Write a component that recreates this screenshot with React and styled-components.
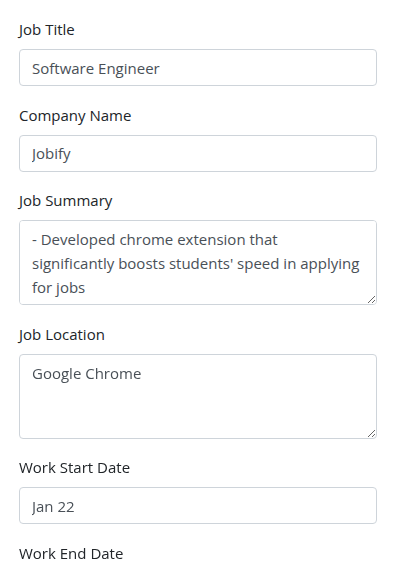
import React from "react";
import styled, { createGlobalStyle } from "styled-components";

const GlobalStyle = createGlobalStyle`
  html, body {
    margin: 0;
    padding: 0;
    background: #ffffff;
  }
  body {
    font-family: "Open Sans", "Noto Sans", "Liberation Sans", sans-serif;
  }
  * {
    box-sizing: border-box;
  }
`;

const fields = [
  { label: "Job Title", value: "Software Engineer" },
  { label: "Company Name", value: "Jobify" },
  {
    label: "Job Summary",
    value:
      "- Developed chrome extension that significantly boosts students' speed in applying for jobs",
    multiline: true,
  },
  { label: "Job Location", value: "Google Chrome", multiline: true },
  { label: "Work Start Date", value: "Jan 22" },
  { label: "Work End Date", value: "" },
];

const App = () => (
  <>
    <GlobalStyle />
    <Form>
      {fields.map((f) => (
        <Group key={f.label}>
          <Label>{f.label}</Label>
          {f.multiline ? (
            <TextArea defaultValue={f.value} rows={3} />
          ) : (
            <Input type="text" defaultValue={f.value} />
          )}
        </Group>
      ))}
    </Form>
  </>
);

const Form = styled.form`
  display: flex;
  flex-direction: column;
  gap: 16.5px;
  padding: 17px 18px 0 19px;
  border-left: 2px solid #fcfcf1;
  margin-left: -2px;
  min-height: 573px;
`;

const Group = styled.div`
  display: flex;
  flex-direction: column;
`;

const Label = styled.label`
  display: block;
  font-size: 15px;
  line-height: 24px;
  color: #212529;
  margin-bottom: 8px;
`;

const fieldBase = `
  width: 100%;
  font-family: "Open Sans", "Noto Sans", "Liberation Sans", sans-serif;
  font-size: 15px;
  line-height: 24px;
  color: #495057;
  background: #ffffff;
  border: 1px solid #ced4da;
  border-radius: 4px;
  padding: 6px 15px 6px 12px;
  outline: none;
`;

const Input = styled.input`
  ${fieldBase}
  height: 37px;
`;

const TextArea = styled.textarea`
  ${fieldBase}
  height: 85px;
  resize: vertical;
  display: block;
`;

export default App;
